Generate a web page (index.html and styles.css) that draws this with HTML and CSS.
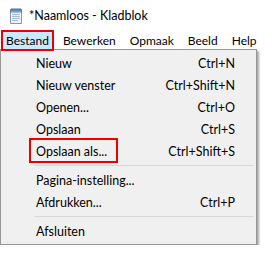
FILE: index.html
```html
<!DOCTYPE html>
<html>

<head>
    <title>
        Naamloos - Kladblok
    </title>
    <link rel="stylesheet" href="styles.css">
</head>

<body>
    <header class="titlebar">
        <svg class="app-icon" width="16" height="17" viewBox="0 0 16 17">
            <path d="M2.5 2.5 H13.5 V16.5 H2.5 Z" fill="#eef3f8" stroke="#7f98b3" />
            <path d="M2.5 2.5 H13.5 V5 H2.5 Z" fill="#8fb6dc" stroke="#5f86ad" />
            <path d="M4 1 V4 M6 1 V4 M8 1 V4 M10 1 V4 M12 1 V4" stroke="#4a6f95" />
            <path d="M4 7.5 H12 M4 9.5 H12 M4 11.5 H12 M4 13.5 H10" stroke="#a8bbd0" />
        </svg>
        <span class="title">*Naamloos - Kladblok</span>
    </header>

    <nav class="menubar">
        <span class="menu-item open">Bestand</span>
        <span class="menu-item">Bewerken</span>
        <span class="menu-item">Opmaak</span>
        <span class="menu-item">Beeld</span>
        <span class="menu-item">Help</span>
    </nav>

    <ul class="dropdown">
        <li class="entry"><span>Nieuw</span><span class="key">Ctrl+N</span></li>
        <li class="entry"><span>Nieuw venster</span><span class="key">Ctrl+Shift+N</span></li>
        <li class="entry"><span>Openen...</span><span class="key">Ctrl+O</span></li>
        <li class="entry"><span>Opslaan</span><span class="key">Ctrl+S</span></li>
        <li class="entry marked"><span>Opslaan als...</span><span class="key">Ctrl+Shift+S</span></li>
        <li class="separator"></li>
        <li class="entry"><span>Pagina-instelling...</span></li>
        <li class="entry"><span>Afdrukken...</span><span class="key">Ctrl+P</span></li>
        <li class="separator"></li>
        <li class="entry"><span>Afsluiten</span></li>
    </ul>
</body>

</html>
```

FILE: styles.css
```css
body {
    margin: 0;
    font-family: 'Lato', 'Open Sans', sans-serif;
    font-size: 12.5px;
    background-color: #fff;
    color: #000;
}

.titlebar {
    height: 30px;
    display: flex;
    align-items: center;
    padding-left: 8px;
}

.app-icon {
    margin-right: 5px;
}

.title {
    font-size: 12.5px;
}

.menubar {
    height: 20px;
    display: flex;
    align-items: center;
    padding-left: 1px;
    font-size: 12px;
}

.menu-item {
    padding: 0 5px;
    line-height: 17px;
    border: 2px solid transparent;
}

.menu-item.open {
    background-color: #cce8ff;
    border-color: #e00;
    padding: 0 3px;
    margin-right: 2px;
}

.dropdown {
    list-style: none;
    margin: -1px 0 0;
    width: 255px;
    padding: 2px 0 2px;
    background-color: #f0f0f0;
    border: 1px solid #979797;
    box-shadow: 2px 2px 2px rgba(0, 0, 0, 0.35);
}

.entry {
    position: relative;
    height: 22px;
    display: flex;
    align-items: center;
    justify-content: space-between;
    padding: 0 21px 0 35px;
}

.marked::after {
    content: "";
    position: absolute;
    left: 28px;
    top: -2px;
    width: 85px;
    height: 21px;
    border: 2px solid #e00;
}

.separator {
    height: 7px;
    display: flex;
    align-items: center;
    margin: 0 2px 0 33px;
}

.separator::before {
    content: "";
    flex: 1;
    border-top: 1px solid #d7d7d7;
}
```
